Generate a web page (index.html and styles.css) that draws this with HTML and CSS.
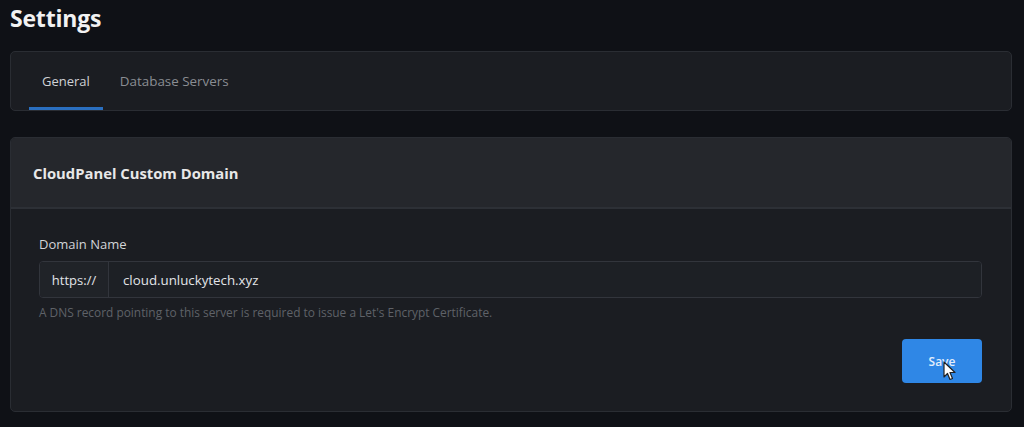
FILE: index.html
```html
<!DOCTYPE html>
<html>
<head>
<meta charset="utf-8">
<link rel="stylesheet" href="styles.css">
</head>
<body>
<div class="page">
  <h1 class="title">Settings</h1>
  <div class="card tabs-card">
    <nav class="tabs">
      <a class="tab active">General</a>
      <a class="tab">Database Servers</a>
    </nav>
  </div>
  <div class="card domain-card">
    <div class="card-header">CloudPanel Custom Domain</div>
    <div class="card-body">
      <label class="label">Domain Name</label>
      <div class="input-group">
        <span class="prefix">https://</span>
        <span class="input">cloud.unluckytech.xyz</span>
      </div>
      <p class="help">A DNS record pointing to this server is required to issue a Let's Encrypt Certificate.</p>
      <div class="actions">
        <button class="btn">Save
          <svg class="cursor" width="14" height="20" viewBox="0 0 14 20"><path d="M1 1 L1 16 L4.5 12.5 L7 18.5 L9.5 17.5 L7 11.5 L12 11.5 Z" fill="#fff" stroke="#222" stroke-width="1.2" stroke-linejoin="round"/></svg>
        </button>
      </div>
    </div>
  </div>
</div>
</body>
</html>
```
FILE: styles.css
```css
* { box-sizing: border-box; }
html, body { margin: 0; padding: 0; }
body {
  background: #0f1116;
  font-family: "Open Sans", "Noto Sans", sans-serif;
  color: #e6e6e6;
  width: 1024px;
  height: 427px;
  overflow: hidden;
}
.page { padding: 2px 12px 0 10px; }
.title {
  margin: 0;
  font-size: 23px;
  font-weight: 700;
  color: #f2f2f2;
  line-height: 32px;
  letter-spacing: -0.2px;
}
.card {
  background: #1b1d22;
  border: 1px solid #2a2d33;
  border-radius: 5px;
}
.tabs-card { margin-top: 17px; height: 60px; }
.tabs { display: flex; padding-left: 18px; height: 100%; align-items: stretch; }
.tab {
  font-size: 13px;
  color: #8a8d93;
  padding: 0 13px;
  display: flex;
  align-items: center;
  height: 100%;
  padding-top: 2px;
  border-bottom: 3px solid transparent;
}
.tab + .tab { padding-left: 17px; font-size: 13.4px; }
.tab.active { color: #d0d2d6; border-bottom-color: #2a6fc0; }
.domain-card { margin-top: 26px; height: 275px; overflow: hidden; }
.card-header {
  background: #25272c;
  height: 71px;
  display: flex;
  align-items: center;
  padding-left: 22px;
  font-size: 14.8px;
  font-weight: 700;
  color: #e8e8e8;
  border-bottom: 2px solid #2d3036;
}
.card-body { padding: 26px 29px 0 28px; }
.label { display: block; font-size: 13px; color: #d2d4d8; line-height: 18px; }
.input-group {
  display: flex;
  margin-top: 8px;
  height: 37px;
  border: 1px solid #32353c;
  border-radius: 4px;
  overflow: hidden;
}
.prefix {
  background: #202328;
  width: 69px;
  display: flex;
  align-items: center;
  justify-content: center;
  font-size: 13px;
  color: #e2e4e8;
  border-right: 1px solid #32353c;
}
.input {
  flex: 1;
  background: #1d2025;
  display: flex;
  align-items: center;
  padding-left: 14px;
  font-size: 13.3px;
  color: #e2e4e8;
}
.help { margin: 6px 0 0; font-size: 11.9px; color: #5f6268; line-height: 16px; }
.actions { display: flex; justify-content: flex-end; margin-top: 19px; }
.btn {
  position: relative;
  width: 80px;
  height: 44px;
  background: #2f87e6;
  border: none;
  border-radius: 4px;
  color: #e3eefb;
  font-family: inherit;
  font-size: 12px;
  font-weight: 600;
  padding: 0;
}
.cursor { position: absolute; left: 41px; top: 22px; }
```
